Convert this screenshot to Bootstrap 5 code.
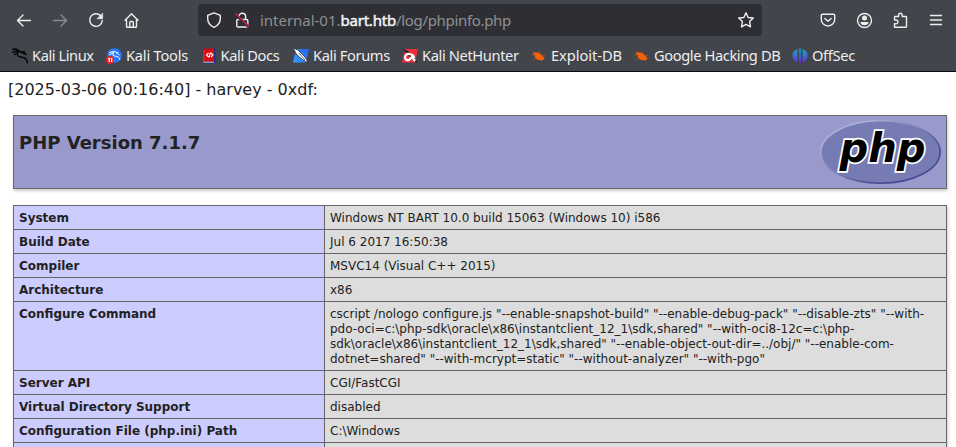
<!DOCTYPE html>
<html lang="en">
<head>
<meta charset="utf-8">
<title>phpinfo()</title>
<meta name="viewport" content="width=device-width, initial-scale=1">
<link href="https://cdn.jsdelivr.net/npm/bootstrap@5.3.0/dist/css/bootstrap.min.css" rel="stylesheet">
<style>
body{font-family:"DejaVu Sans",sans-serif;color:#222;font-size:16px;line-height:19px;height:447px}
.chrome{background:#42454c;height:72px;border-bottom:1px solid #0c0c0d;color:#eeeeec;font-family:"Noto Sans","Open Sans",sans-serif}
.toolbar{height:40px;padding-left:16px;padding-right:12px}
.toolbar svg{width:16px;height:16px;flex:none;overflow:visible}
.ico{fill:none;stroke:#eeeeec;stroke-width:1.4;stroke-linecap:round;stroke-linejoin:round}
.navs{gap:20px;width:182px}
.urlbar{background:#2e2f34;width:564px;height:32px;border-radius:4px;padding:0 8px;gap:12px}
.address{font-size:15px;color:#8f8f92;white-space:nowrap;line-height:32px;margin-left:-2px;letter-spacing:-.03px}
.address b{font-weight:400;color:#f4f4f2;-webkit-text-stroke:.45px #f4f4f2;letter-spacing:-.2px}
.address .path{letter-spacing:-.33px}
.actions{gap:20px}
.marks{height:31px;padding-left:12px;font-size:14.67px}
.bm{gap:4px;white-space:nowrap;line-height:31px}
.bm svg{width:16px;height:16px;flex:none}
.b1{width:94px;letter-spacing:-.43px}.b2{width:95.5px;letter-spacing:-.23px}.b3{width:91.500px;letter-spacing:-.38px}.b4{width:109px;letter-spacing:-.38px}
.b5{width:129px;letter-spacing:-.38px}.b6{width:103px;letter-spacing:-.05px}.b7{width:158px;letter-spacing:-.4px}.b8{letter-spacing:-.33px}
.b3 svg{margin-left:-1px}
.logline{padding:8px 8px 0;height:43px}
.info{margin:0 9px 0 13px}
.banner{background:#99c;border:1px solid #666;box-shadow:1px 2px 3px #ccc;height:74px;padding:4px 5px}
.banner h1{font-size:18px;font-weight:700;line-height:21px;margin:12px 0 0}
.facts{border:1px solid #666;border-collapse:collapse;box-shadow:1px 2px 3px #ccc;margin-top:16px;width:934px;table-layout:fixed;font-size:12px;line-height:15px}
.facts td,.facts th{border:1px solid #666;padding:5px 5px 3px;vertical-align:baseline}
.facts th{background:#ccf;font-weight:700;width:311px}
.facts td{background:#ddd}
</style>
<script src="https://cdn.jsdelivr.net/npm/bootstrap@5.3.0/dist/js/bootstrap.bundle.min.js"></script>
</head>
<body class="bg-white overflow-hidden">
<svg width="0" height="0" class="d-block">
<defs>
<linearGradient id="off" x1="0" y1="0" x2="0" y2="1"><stop offset="0" stop-color="#11a8c8"/><stop offset=".5" stop-color="#3a6fd0"/><stop offset="1" stop-color="#6a1fd0"/></linearGradient>
<linearGradient id="blue" x1="1" y1="0" x2="0" y2="1"><stop offset="0" stop-color="#2161f5"/><stop offset="1" stop-color="#36a0ff"/></linearGradient>
<linearGradient id="rim" x1="0" y1="0" x2="1" y2="1"><stop offset=".2" stop-color="#aeb2d5"/><stop offset=".5" stop-color="#7377ad"/><stop offset=".75" stop-color="#484893"/></linearGradient>
<symbol id="bug" viewBox="0 0 16 16"><path d="M2 4.500C5 3.900 8.500 4.500 10 6.500L13 9.500 12.800 12 10 12.500 6 11.500 3.500 9 4 7.700 2.500 6.500z" fill="#f2600c"/><path d="M4 5 2 3M9 5 8.500 3M10.500 7 14 7.500M5 10.500 1.500 11.500M12 9 14.500 10M3 8 .5 6" stroke="#b8541c" stroke-width=".7" fill="none"/></symbol>
</defs>
</svg>
<header class="chrome">
<div class="toolbar d-flex align-items-center">
<div class="navs d-flex align-items-center">
<svg class="ico" viewBox="0 0 16 16"><path d="M1.500 8.500H14.500M7 3 1.500 8.500 7 14"/></svg>
<svg class="ico" viewBox="0 0 16 16" opacity=".42"><path d="M1.500 8.500H14.500M9 3 14.500 8.500 9 14"/></svg>
<svg class="ico" viewBox="0 0 16 16"><path d="M12.500 3.600A6.300 6.300 0 1 0 14.300 8.500"/><path d="M14.600 1.500V6.700H9.400z" fill="#eeeeec" stroke-width=".7"/></svg>
<svg class="ico" viewBox="0 0 16 16"><path d="M1 8.300 7.500 1.800 14 8.300M2.500 7V14.500Q2.500 15.300 3.300 15.300H11.700Q12.500 15.300 12.500 14.500V7M5.800 15V10.500Q5.800 9.500 6.500 9.500H8.500Q9.300 9.500 9.300 10.500V15"/></svg>
</div>
<div class="urlbar d-flex align-items-center">
<svg class="ico" viewBox="0 0 16 16"><path d="M8 .9 14.300 3.300V6.500C14.300 11 11.500 13.800 8 15.400 4.500 13.800 1.700 11 1.700 6.500V3.300z"/></svg>
<svg class="ico" viewBox="0 0 16 16"><path d="M5 7V4.500a3.300 3.300 0 0 1 6.600 0V7"/><rect x="2.800" y="7.500" width="11" height="7.500" rx="1"/><path d="M1 2 15.500 15.500" stroke="#2e2f34" stroke-width="3"/><path d="M1.600 1.500 14.800 14.500" stroke="#dc1b48"/></svg>
<span class="address flex-grow-1">internal-01.<b>bart.htb</b><span class="path">/log/phpinfo.php</span></span>
<svg class="ico" viewBox="0 0 16 16"><path d="M8 .8 10.200 5.500 15.300 6 11.600 9.600 12.500 14.900 8 12.400 3.500 14.900 4.400 9.600.7 6 5.800 5.500z"/></svg>
</div>
<div class="actions d-flex align-items-center ms-auto">
<svg class="ico" viewBox="0 0 16 16"><path d="M2.300 2.200H13.700Q14.700 2.200 14.700 3.200V7.500A6.700 6.500 0 0 1 1.300 7.500V3.200Q1.300 2.200 2.300 2.200z"/><path d="M4.800 6.500 8 9.300 11.200 6.500"/></svg>
<svg class="ico" viewBox="0 0 16 16"><circle cx="8.500" cy="8.500" r="7"/><circle cx="8.500" cy="5.900" r="2.500" fill="#eeeeec" stroke="none"/><path d="M4.300 10H12.700Q12 13.300 8.500 13.300T4.300 10z" fill="#eeeeec" stroke="none"/></svg>
<svg class="ico" viewBox="0 0 16 16"><path d="M2.500 15.300V11.800H4A1.900 1.900 0 0 0 4 8H2.500V5.200Q2.500 4.500 3.300 4.500H6.600V3a1.800 1.800 0 0 1 3.600 0V4.500H14Q14.500 4.500 14.500 5.200V14.600Q14.500 15.300 13.800 15.300z"/></svg>
<svg class="ico" viewBox="0 0 16 16"><path d="M2.500 3.500H13.500M2.500 8H13.500M2.500 12.500H13.500"/></svg>
</div>
</div>
<nav class="marks d-flex align-items-center">
<div class="bm b1 d-flex align-items-center"><svg viewBox="0 0 16 16" fill="none" stroke="#070707"><path d="M0 1.500 4 1 8 3.500 13 4M0 4.500 4 3 7 4M2 7 5 4.500M6 4C4 9 8 9 11 9.500Q15 10 15.500 15.500" stroke-width="1.500"/><path d="M8 4 12 3.500 15 7 12 6z" fill="#070707" stroke-width=".7"/></svg>Kali Linux</div>
<div class="bm b2 d-flex align-items-center"><svg viewBox="0 0 16 16"><circle cx="8.500" cy="7.500" r="7.300" fill="#2777ff"/><path d="M3 4.500 8 3.500 12 5M3 7 8 4.500M7 5Q6 8 9 8.200 13 8 14 12M10 4.500 13.500 7" fill="none" stroke="#fff"/><circle cx="4" cy="12" r="4" fill="#ed2027"/><path d="M2 10.500H3.300V14M4.500 10.500H5.700V14" fill="none" stroke="#fff" stroke-width="1.200"/></svg>Kali Tools</div>
<div class="bm b3 d-flex align-items-center"><svg viewBox="0 0 16 16"><path d="M2 .5H14.500V15.500H2z" fill="#2f2c83"/><path d="M4 .5H13V13.500H4z" fill="#d90910"/><path d="M2 2.500 4 .5V13.500L2 15.500z" fill="#e51b20"/><path d="M2.500 14.200H13" stroke="#ccc"/><path d="M7.500 5 5.500 7 7.500 9M10 5 12 7 10 9M9.500 4.500 8 9.500" fill="none" stroke="#fff" stroke-width="1.100"/></svg>Kali Docs</div>
<div class="bm b4 d-flex align-items-center"><svg viewBox="0 0 16 16"><path d="M3 1H16L13 14.500H0z" fill="url(#blue)"/><path d="M0 0 5 2 12 9 15.500 15 10 12 4 7z" fill="#fff" stroke="#252b33" stroke-width=".8"/><path d="M6 5 12 12" stroke="#59616b"/></svg>Kali Forums</div>
<div class="bm b5 d-flex align-items-center"><svg viewBox="0 0 16 16"><path d="M3 1H16L13 14.500H0z" fill="#f02e38"/><path d="M0 .5 6 3 12 9 15.500 15 11 12z" fill="#202126"/><path d="M3 10Q3 5.500 7.500 6 12 7 12 10M3 10Q4 13 7 12L10 9 13 13" fill="none" stroke="#fff" stroke-width="2.200"/></svg>Kali NetHunter</div>
<div class="bm b6 d-flex align-items-center"><svg><use href="#bug"/></svg>Exploit-DB</div>
<div class="bm b7 d-flex align-items-center"><svg><use href="#bug"/></svg>Google Hacking DB</div>
<div class="bm b8 d-flex align-items-center"><svg viewBox="0 0 16 16" fill="url(#off)"><path d="M5.500 1V14.500Q.5 12.500.5 7.700T5.500 1zM10.500 1V14.500Q15.500 12.500 15.500 7.700T10.500 1zM7.200.5H8.800V15.500H7.200z"/></svg>OffSec</div>
</nav>
</header>
<main>
<div class="logline">[2025-03-06 00:16:40] - harvey - 0xdf:</div>
<div class="info">
<div class="banner d-flex justify-content-between align-items-start">
<h1>PHP Version 7.1.7</h1>
<svg width="121" height="64" viewBox="0 0 121 64"><ellipse cx="60.500" cy="32" rx="59.700" ry="31.200" fill="#777bb3" stroke="url(#rim)" stroke-width="1.600"/><text x="19.500" y="41.500" font-family="DejaVu Sans" font-size="41" font-weight="700" font-style="italic" fill="#000" stroke="#fff" stroke-width="3.600" paint-order="stroke" textLength="86" lengthAdjust="spacingAndGlyphs">php</text></svg>
</div>
<table class="facts">
<tbody>
<tr><th scope="row">System</th><td>Windows NT BART 10.0 build 15063 (Windows 10) i586</td></tr>
<tr><th scope="row">Build Date</th><td>Jul 6 2017 16:50:38</td></tr>
<tr><th scope="row">Compiler</th><td>MSVC14 (Visual C++ 2015)</td></tr>
<tr><th scope="row">Architecture</th><td>x86</td></tr>
<tr><th scope="row">Configure Command</th><td>cscript /nologo configure.js "--enable-snapshot-build" "--enable-debug-pack" "--disable-zts" "--with-<br>pdo-oci=c:\php-sdk\oracle\x86\instantclient_12_1\sdk,shared" "--with-oci8-12c=c:\php-<br>sdk\oracle\x86\instantclient_12_1\sdk,shared" "--enable-object-out-dir=../obj/" "--enable-com-<br>dotnet=shared" "--with-mcrypt=static" "--without-analyzer" "--with-pgo"</td></tr>
<tr><th scope="row">Server API</th><td>CGI/FastCGI</td></tr>
<tr><th scope="row">Virtual Directory Support</th><td>disabled</td></tr>
<tr><th scope="row">Configuration File (php.ini) Path</th><td>C:\Windows</td></tr>
<tr><th>&nbsp;</th><td>&nbsp;</td></tr>
</tbody>
</table>
</div>
</main>
</body>
</html>
